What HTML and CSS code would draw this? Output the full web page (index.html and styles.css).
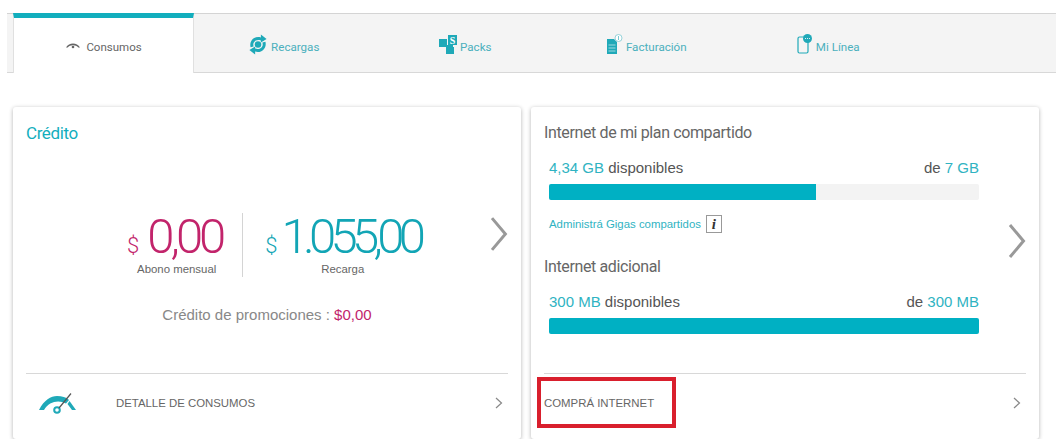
FILE: index.html
```html
<!DOCTYPE html>
<html lang="es">
<head>
    <meta charset="UTF-8">
    <meta name="viewport" content="width=device-width, initial-scale=1.0">
    <title>Consumos</title>
    <link rel="stylesheet" href="styles.css">
</head>
<body>
    <!-- Solapas -->
    <nav class="tabs">
        <a class="tab tab-active">
            <svg class="icon-small" width="16" height="8" viewBox="0 0 16 8"><path d="M1 6.5C4 1 12 1 15 6.5L13.3 6.5C11 3.5 5 3.5 2.7 6.5Z" fill="#666"/><circle cx="8" cy="6" r="1.3" fill="#666"/></svg>
            <span>Consumos</span>
        </a>
        <a class="tab">
            <svg width="20" height="21" viewBox="0 0 20 22"><path d="M2.2 14C0.5 7 6.5 1.5 13 3.6L13 0.6L19 5.2L13 9L13 6.8C8 5 3.8 8.6 5.4 13Z" fill="#1fa9b8"/><path d="M17.8 8C19.5 15 13.5 20.5 7 18.4L7 21.4L1 16.8L7 13L7 15.2C12 17 16.2 13.4 14.6 9Z" fill="#1fa9b8"/><circle cx="10" cy="11" r="3.4" fill="#1fa9b8"/></svg>
            <span>Recargas</span>
        </a>
        <a class="tab">
            <svg width="18" height="19" viewBox="0 0 18 19"><rect x="0" y="4" width="8" height="8" fill="#1fa9b8"/><rect x="9" y="0" width="9" height="10" fill="#1fa9b8"/><rect x="8" y="10" width="6" height="2" fill="#1fa9b8"/><rect x="7" y="12" width="8" height="7" fill="#1fa9b8"/><text x="13.5" y="8.5" class="icon-letter">S</text></svg>
            <span>Packs</span>
        </a>
        <a class="tab">
            <svg width="16" height="20" viewBox="0 0 16 20"><path d="M0 5H7L10 8V20H0Z" fill="#1fa9b8"/><path d="M1.5 11H8.5M1.5 14H8.5M1.5 17H8.5" stroke="#9fdbe1" stroke-width="1"/><circle cx="11.5" cy="4" r="3.5" fill="#fff" stroke="#7cc8d1" stroke-width="0.8"/><path d="M11.5 2V6" stroke="#7cc8d1" stroke-width="1"/></svg>
            <span>Facturación</span>
        </a>
        <a class="tab">
            <svg width="16" height="20" viewBox="0 0 16 20"><rect x="1" y="3" width="10" height="16" rx="1.5" fill="none" stroke="#1fa9b8" stroke-width="1.2"/><circle cx="10.5" cy="4.5" r="4.5" fill="#1fa9b8"/><path d="M8 4.5H13" stroke="#d8f1f3" stroke-width="1.2" stroke-dasharray="1 1"/></svg>
            <span>Mi Línea</span>
        </a>
    </nav>

    <main class="cards">
        <!-- Crédito -->
        <section class="card">
            <div class="card-body card-credit">
                <h2 class="credit-title">Crédito</h2>
                <div class="amounts">
                    <div class="amount amount-pink">
                        <div class="amount-value"><small>$</small>0,00</div>
                        <div class="amount-label">Abono mensual</div>
                    </div>
                    <div class="amount amount-teal">
                        <div class="amount-value"><small>$</small>1.055,00</div>
                        <div class="amount-label">Recarga</div>
                    </div>
                    <svg class="chevron-big" width="18" height="34" viewBox="0 0 18 34"><path d="M2 1L15.5 17L2 33" fill="none" stroke="#999" stroke-width="3"/></svg>
                </div>
                <p class="promo">Crédito de promociones : <b>$0,00</b></p>
            </div>
            <a class="card-footer">
                <svg class="gauge" width="38" height="21" viewBox="0 0 38 21"><path d="M1 17C6 7 13 3 19 3C24 3 28 4 31 7L28 10.5C21 6.5 11 8 6 17Z" fill="#1fa9b8"/><path d="M31.5 8L38 17H34L29.5 11Z" fill="#1fa9b8"/><circle cx="19" cy="17" r="2.8" fill="none" stroke="#1fa9b8" stroke-width="2"/><path d="M21 15L33 0.5" stroke="#555" stroke-width="1.2"/></svg>
                <span class="footer-text">DETALLE DE CONSUMOS</span>
                <svg class="chevron-small" width="8" height="12" viewBox="0 0 8 12"><path d="M1 1L6.5 6L1 11" fill="none" stroke="#888" stroke-width="1.2"/></svg>
            </a>
        </section>

        <!-- Internet -->
        <section class="card">
            <div class="card-body card-internet">
                <h3>Internet de mi plan compartido</h3>
                <div class="usage">
                    <div class="usage-text">
                        <span><em>4,34 GB</em> disponibles</span>
                        <span>de <em>7 GB</em></span>
                    </div>
                    <div class="bar"><div class="bar-fill" style="width: 62%"></div></div>
                </div>
                <p class="shared">Administrá Gigas compartidos <i class="info">i</i></p>
                <h3>Internet adicional</h3>
                <div class="usage">
                    <div class="usage-text">
                        <span><em>300 MB</em> disponibles</span>
                        <span>de <em>300 MB</em></span>
                    </div>
                    <div class="bar"><div class="bar-fill" style="width: 100%"></div></div>
                </div>
                <svg class="chevron-side" width="18" height="34" viewBox="0 0 18 34"><path d="M2 1L15.5 17L2 33" fill="none" stroke="#999" stroke-width="3"/></svg>
            </div>
            <a class="card-footer footer-buy">
                <span class="footer-text">COMPRÁ INTERNET</span>
                <svg class="chevron-small" width="8" height="12" viewBox="0 0 8 12"><path d="M1 1L6.5 6L1 11" fill="none" stroke="#888" stroke-width="1.2"/></svg>
                <div class="highlight"></div>
            </a>
        </section>
    </main>
</body>
</html>
```

FILE: styles.css
```css
body {
    font-family: "Liberation Sans", Arial, sans-serif;
    background-color: #ffffff;
    margin: 0;
    padding: 13px 7px 0 7px;
    color: #666;
}
.tabs {
    display: flex;
    height: 58px;
    background-color: #f4f4f4;
    border-top: 1px solid #d4d4d4;
    border-bottom: 1px solid #d8d8d8;
    padding-left: 6px;
}
.tab {
    width: 181.5px;
    display: flex;
    align-items: center;
    justify-content: center;
    gap: 3px;
    font-family: Roboto, sans-serif;
    color: #4bb0bd;
    font-size: 11.6px;
    padding-top: 8px;
    padding-right: 2px;
    box-sizing: border-box;
}
.tab svg {
    margin-top: -6px;
}
.tab-active {
    width: 181px;
    background: #ffffff;
    color: #666;
    font-size: 11.5px;
    border-top: 5px solid #12aebd;
    border-left: 1px solid #e0e0e0;
    border-right: 1px solid #e0e0e0;
    margin: -1px 0 -1px 0;
    height: 60px;
    gap: 5px;
    padding-top: 2px;
    padding-right: 0;
}
.tab-active .icon-small {
    margin-top: -3px;
}
.icon-letter {
    font-family: "Liberation Serif", serif;
    font-weight: bold;
    font-size: 10px;
    text-anchor: middle;
    fill: #fff;
}
.cards {
    display: flex;
    gap: 10px;
    margin: 34px 0 0 6px;
}
.card {
    background: #ffffff;
    border-radius: 3px;
    box-shadow: 0 1px 4px rgba(0,0,0,0.3);
    height: 332px;
    width: 508px;
    display: flex;
    flex-direction: column;
    box-sizing: border-box;
    position: relative;
}
.card-body {
    flex: 1;
    position: relative;
}
.card-credit {
    padding: 16px 13px 0 13px;
}
.credit-title {
    margin: 0;
    font-family: Roboto, sans-serif;
    font-size: 17px;
    font-weight: 400;
    letter-spacing: -0.4px;
    color: #12aebd;
}
.amounts {
    display: flex;
    margin: 70px 0 0 100px;
    align-items: flex-start;
}
.amount {
    text-align: center;
    height: 64px;
}
.amount-pink {
    color: #c2246b;
    width: 118px;
    padding-right: 15px;
    box-sizing: border-box;
    border-right: 1px solid #d4d4d4;
}
.amount-teal {
    color: #12a5b5;
    width: 200px;
}
.amount-value {
    font-family: Roboto, sans-serif;
    font-weight: 300;
    font-size: 49px;
    letter-spacing: -4px;
    line-height: 48px;
    white-space: nowrap;
}
.amount-pink .amount-value {
    margin-left: -4px;
}
.amount-teal .amount-value {
    letter-spacing: -5.7px;
}
.amount-value small {
    font-size: 22px;
    font-weight: 300;
    letter-spacing: 0;
    margin-right: 8px;
}
.amount-teal .amount-value small {
    margin-right: 4px;
}
.amount-label {
    font-size: 11.4px;
    color: #666;
    margin-top: -7px;
}
.chevron-big {
    margin: 4px 0 0 48px;
}
.promo {
    margin: 29px 0 0 0;
    text-align: center;
    font-size: 15px;
    color: #888;
}
.promo b {
    font-weight: 400;
    color: #c2246b;
}
.card-footer {
    margin: 0 13px;
    height: 66px;
    padding-bottom: 7px;
    box-sizing: border-box;
    border-top: 1px solid #d8d8d8;
    display: flex;
    align-items: center;
    color: #666;
    position: relative;
}
.gauge {
    margin-left: 12px;
}
.card-footer .footer-text {
    flex: 1;
    margin-left: 40px;
    font-size: 11.4px;
}
.footer-buy .footer-text {
    margin-left: 0;
}
.chevron-small {
    margin-right: 5px;
}
.card-internet {
    padding: 17px 13px 0 13px;
}
.card-internet h3 {
    margin: 0;
    font-family: Roboto, sans-serif;
    font-size: 16px;
    line-height: 18px;
    font-weight: 400;
    letter-spacing: -0.37px;
    color: #666;
}
.usage {
    margin: 17px 47px 0 5px;
}
.usage-text {
    display: flex;
    justify-content: space-between;
    font-size: 15px;
    line-height: 17px;
    color: #555;
}
.usage-text em {
    font-style: normal;
    color: #2fb3c2;
}
.bar {
    margin-top: 8px;
    height: 16px;
    border-radius: 2px;
    background: #f3f3f3;
    overflow: hidden;
}
.bar-fill {
    height: 100%;
    background: #00b0c3;
}
.shared {
    margin: 15px 0 25px 5px;
    font-size: 11.4px;
    line-height: 17px;
    color: #2fb3c2;
    display: flex;
    align-items: center;
    gap: 5px;
}
.info {
    width: 14px;
    height: 16px;
    border: 1px solid #999;
    color: #333;
    font-family: "Liberation Serif", serif;
    font-size: 15px;
    font-weight: bold;
    text-align: center;
    line-height: 16px;
}
.chevron-side {
    position: absolute;
    right: 13px;
    top: 117px;
}
.highlight {
    position: absolute;
    left: -7px;
    top: 3px;
    width: 139px;
    height: 51px;
    border: 4px solid #d91f2d;
    box-sizing: border-box;
}
```
